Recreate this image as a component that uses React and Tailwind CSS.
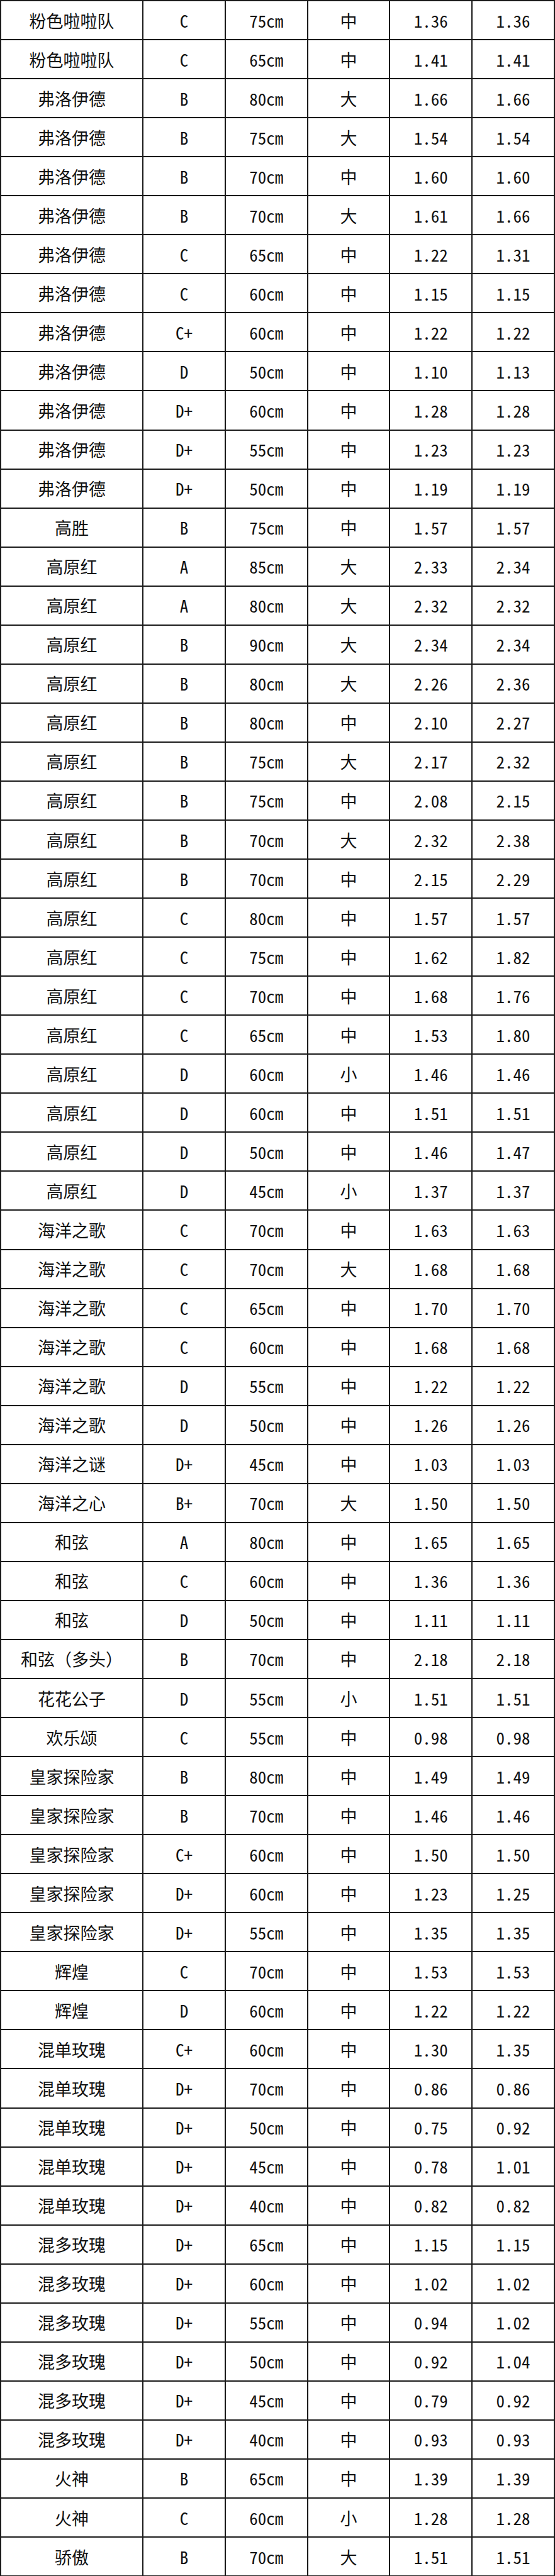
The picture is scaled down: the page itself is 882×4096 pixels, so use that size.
const rows = [
  ["粉色啦啦队", "C", "75cm", "中", "1.36", "1.36"],
  ["粉色啦啦队", "C", "65cm", "中", "1.41", "1.41"],
  ["弗洛伊德", "B", "80cm", "大", "1.66", "1.66"],
  ["弗洛伊德", "B", "75cm", "大", "1.54", "1.54"],
  ["弗洛伊德", "B", "70cm", "中", "1.60", "1.60"],
  ["弗洛伊德", "B", "70cm", "大", "1.61", "1.66"],
  ["弗洛伊德", "C", "65cm", "中", "1.22", "1.31"],
  ["弗洛伊德", "C", "60cm", "中", "1.15", "1.15"],
  ["弗洛伊德", "C+", "60cm", "中", "1.22", "1.22"],
  ["弗洛伊德", "D", "50cm", "中", "1.10", "1.13"],
  ["弗洛伊德", "D+", "60cm", "中", "1.28", "1.28"],
  ["弗洛伊德", "D+", "55cm", "中", "1.23", "1.23"],
  ["弗洛伊德", "D+", "50cm", "中", "1.19", "1.19"],
  ["高胜", "B", "75cm", "中", "1.57", "1.57"],
  ["高原红", "A", "85cm", "大", "2.33", "2.34"],
  ["高原红", "A", "80cm", "大", "2.32", "2.32"],
  ["高原红", "B", "90cm", "大", "2.34", "2.34"],
  ["高原红", "B", "80cm", "大", "2.26", "2.36"],
  ["高原红", "B", "80cm", "中", "2.10", "2.27"],
  ["高原红", "B", "75cm", "大", "2.17", "2.32"],
  ["高原红", "B", "75cm", "中", "2.08", "2.15"],
  ["高原红", "B", "70cm", "大", "2.32", "2.38"],
  ["高原红", "B", "70cm", "中", "2.15", "2.29"],
  ["高原红", "C", "80cm", "中", "1.57", "1.57"],
  ["高原红", "C", "75cm", "中", "1.62", "1.82"],
  ["高原红", "C", "70cm", "中", "1.68", "1.76"],
  ["高原红", "C", "65cm", "中", "1.53", "1.80"],
  ["高原红", "D", "60cm", "小", "1.46", "1.46"],
  ["高原红", "D", "60cm", "中", "1.51", "1.51"],
  ["高原红", "D", "50cm", "中", "1.46", "1.47"],
  ["高原红", "D", "45cm", "小", "1.37", "1.37"],
  ["海洋之歌", "C", "70cm", "中", "1.63", "1.63"],
  ["海洋之歌", "C", "70cm", "大", "1.68", "1.68"],
  ["海洋之歌", "C", "65cm", "中", "1.70", "1.70"],
  ["海洋之歌", "C", "60cm", "中", "1.68", "1.68"],
  ["海洋之歌", "D", "55cm", "中", "1.22", "1.22"],
  ["海洋之歌", "D", "50cm", "中", "1.26", "1.26"],
  ["海洋之谜", "D+", "45cm", "中", "1.03", "1.03"],
  ["海洋之心", "B+", "70cm", "大", "1.50", "1.50"],
  ["和弦", "A", "80cm", "中", "1.65", "1.65"],
  ["和弦", "C", "60cm", "中", "1.36", "1.36"],
  ["和弦", "D", "50cm", "中", "1.11", "1.11"],
  ["和弦（多头）", "B", "70cm", "中", "2.18", "2.18"],
  ["花花公子", "D", "55cm", "小", "1.51", "1.51"],
  ["欢乐颂", "C", "55cm", "中", "0.98", "0.98"],
  ["皇家探险家", "B", "80cm", "中", "1.49", "1.49"],
  ["皇家探险家", "B", "70cm", "中", "1.46", "1.46"],
  ["皇家探险家", "C+", "60cm", "中", "1.50", "1.50"],
  ["皇家探险家", "D+", "60cm", "中", "1.23", "1.25"],
  ["皇家探险家", "D+", "55cm", "中", "1.35", "1.35"],
  ["辉煌", "C", "70cm", "中", "1.53", "1.53"],
  ["辉煌", "D", "60cm", "中", "1.22", "1.22"],
  ["混单玫瑰", "C+", "60cm", "中", "1.30", "1.35"],
  ["混单玫瑰", "D+", "70cm", "中", "0.86", "0.86"],
  ["混单玫瑰", "D+", "50cm", "中", "0.75", "0.92"],
  ["混单玫瑰", "D+", "45cm", "中", "0.78", "1.01"],
  ["混单玫瑰", "D+", "40cm", "中", "0.82", "0.82"],
  ["混多玫瑰", "D+", "65cm", "中", "1.15", "1.15"],
  ["混多玫瑰", "D+", "60cm", "中", "1.02", "1.02"],
  ["混多玫瑰", "D+", "55cm", "中", "0.94", "1.02"],
  ["混多玫瑰", "D+", "50cm", "中", "0.92", "1.04"],
  ["混多玫瑰", "D+", "45cm", "中", "0.79", "0.92"],
  ["混多玫瑰", "D+", "40cm", "中", "0.93", "0.93"],
  ["火神", "B", "65cm", "中", "1.39", "1.39"],
  ["火神", "C", "60cm", "小", "1.28", "1.28"],
  ["骄傲", "B", "70cm", "大", "1.51", "1.51"],
];

export default function App() {
  return (
    <div className="w-[882px] bg-white">
      <table
        className="w-[882px] table-fixed border-collapse text-[27px] text-[#111]"
        style={{ fontFamily: '"Noto Sans Mono CJK SC", "Noto Sans CJK SC", "Liberation Mono", monospace' }}
      >
        <colgroup>
          <col className="w-[226px]" />
          <col />
          <col />
          <col />
          <col />
          <col />
        </colgroup>
        <tbody>
          {rows.map((r, i) => (
            <tr key={i} className="h-[62.06px]">
              {r.map((c, j) => (
                <td
                  key={j}
                  className="border-2 border-[#1a1a1a] p-0 text-center align-middle leading-none whitespace-nowrap"
                >
                  {c}
                </td>
              ))}
            </tr>
          ))}
        </tbody>
      </table>
    </div>
  );
}
